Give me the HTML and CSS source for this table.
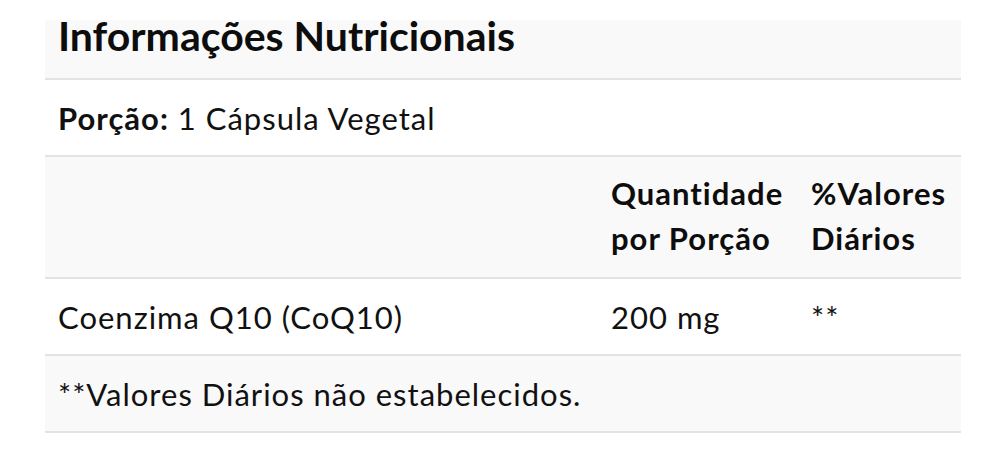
FILE: index.html
```html
<!DOCTYPE html>
<html lang="pt-BR">
<head>
<meta charset="utf-8">
<link rel="stylesheet" href="styles.css">
</head>
<body>
<div class="page">
  <table class="facts">
    <colgroup>
      <col class="c-name">
      <col class="c-qty">
      <col class="c-dv">
    </colgroup>
    <tbody>
      <tr class="title-row shade">
        <th colspan="3" class="title">Informações Nutricionais</th>
      </tr>
      <tr>
        <td colspan="3"><strong>Porção:</strong> 1 Cápsula Vegetal</td>
      </tr>
      <tr class="shade head">
        <td></td>
        <th>Quantidade por Porção</th>
        <th>%Valores Diários</th>
      </tr>
      <tr>
        <td>Coenzima Q10 (CoQ10)</td>
        <td>200 mg</td>
        <td>**</td>
      </tr>
      <tr class="shade">
        <td colspan="3">**Valores Diários não estabelecidos.</td>
      </tr>
    </tbody>
  </table>
</div>
</body>
</html>
```

FILE: styles.css
```css
html, body {
  margin: 0;
  padding: 0;
  background: #ffffff;
}

.page {
  padding: 20px 45px;
  font-family: "Lato", "Open Sans", sans-serif;
  color: #111111;
  font-variant-ligatures: none;
}

.facts {
  width: 916px;
  border-collapse: collapse;
  table-layout: fixed;
  font-size: 31px;
  line-height: 45px;
  letter-spacing: 1px;
}

.c-name { width: 553px; }
.c-qty { width: 200px; }
.c-dv { width: 163px; }

.facts td,
.facts th {
  padding: 16px 13px 14px;
  text-align: left;
  vertical-align: top;
  border-bottom: 2px solid #e3e3e3;
}

.facts th {
  font-weight: 700;
}

.facts strong {
  font-weight: 700;
}

.shade {
  background: #f9f9f9;
}

.facts .title {
  font-size: 41px;
  line-height: 32px;
  letter-spacing: 0;
  padding: 0 13px 26px;
  color: #0d0d0d;
}

.head th {
  color: #0d0d0d;
  padding-top: 14px;
  padding-bottom: 16px;
  letter-spacing: 1px;
}
```
